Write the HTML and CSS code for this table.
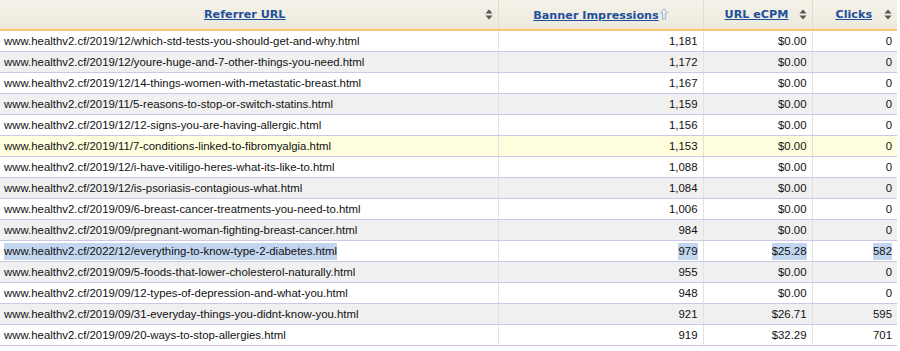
FILE: index.html
```html
<!DOCTYPE html>
<html>
<head>
<meta charset="utf-8">
<link rel="stylesheet" href="styles.css">
</head>
<body>
<table class="report">
  <colgroup>
    <col class="c-url"><col class="c-imp"><col class="c-ecpm"><col class="c-clicks">
  </colgroup>
  <thead>
    <tr>
      <th class="th-url"><a href="#">Referrer URL</a><svg class="sort" viewBox="0 0 8 11"><path d="M4 0.5 L7.5 4.5 H0.5 Z M4 10.5 L7.5 6.5 H0.5 Z"/></svg></th>
      <th><a href="#">Banner Impressions</a><svg class="asc" viewBox="0 0 8 12"><path d="M4 0.8 L7.3 5 H5.4 V11.2 H2.6 V5 H0.7 Z"/></svg></th>
      <th class="th-num"><a href="#">URL eCPM</a><svg class="sort" viewBox="0 0 8 11"><path d="M4 0.5 L7.5 4.5 H0.5 Z M4 10.5 L7.5 6.5 H0.5 Z"/></svg></th>
      <th class="th-num"><a href="#">Clicks</a><svg class="sort" viewBox="0 0 8 11"><path d="M4 0.5 L7.5 4.5 H0.5 Z M4 10.5 L7.5 6.5 H0.5 Z"/></svg></th>
    </tr>
  </thead>
  <tbody>
    <tr><td>www.healthv2.cf/2019/12/which-std-tests-you-should-get-and-why.html</td><td>1,181</td><td>$0.00</td><td>0</td></tr>
    <tr><td>www.healthv2.cf/2019/12/youre-huge-and-7-other-things-you-need.html</td><td>1,172</td><td>$0.00</td><td>0</td></tr>
    <tr><td>www.healthv2.cf/2019/12/14-things-women-with-metastatic-breast.html</td><td>1,167</td><td>$0.00</td><td>0</td></tr>
    <tr><td>www.healthv2.cf/2019/11/5-reasons-to-stop-or-switch-statins.html</td><td>1,159</td><td>$0.00</td><td>0</td></tr>
    <tr><td>www.healthv2.cf/2019/12/12-signs-you-are-having-allergic.html</td><td>1,156</td><td>$0.00</td><td>0</td></tr>
    <tr class="hover"><td>www.healthv2.cf/2019/11/7-conditions-linked-to-fibromyalgia.html</td><td>1,153</td><td>$0.00</td><td>0</td></tr>
    <tr><td>www.healthv2.cf/2019/12/i-have-vitiligo-heres-what-its-like-to.html</td><td>1,088</td><td>$0.00</td><td>0</td></tr>
    <tr><td>www.healthv2.cf/2019/12/is-psoriasis-contagious-what.html</td><td>1,084</td><td>$0.00</td><td>0</td></tr>
    <tr><td>www.healthv2.cf/2019/09/6-breast-cancer-treatments-you-need-to.html</td><td>1,006</td><td>$0.00</td><td>0</td></tr>
    <tr><td>www.healthv2.cf/2019/09/pregnant-woman-fighting-breast-cancer.html</td><td>984</td><td>$0.00</td><td>0</td></tr>
    <tr class="selected"><td><span class="sel">www.healthv2.cf/2022/12/everything-to-know-type-2-diabetes.html</span></td><td><span class="sel">979</span></td><td><span class="sel">$25.28</span></td><td><span class="sel">582</span></td></tr>
    <tr><td>www.healthv2.cf/2019/09/5-foods-that-lower-cholesterol-naturally.html</td><td>955</td><td>$0.00</td><td>0</td></tr>
    <tr><td>www.healthv2.cf/2019/09/12-types-of-depression-and-what-you.html</td><td>948</td><td>$0.00</td><td>0</td></tr>
    <tr><td>www.healthv2.cf/2019/09/31-everyday-things-you-didnt-know-you.html</td><td>921</td><td>$26.71</td><td>595</td></tr>
    <tr><td>www.healthv2.cf/2019/09/20-ways-to-stop-allergies.html</td><td>919</td><td>$32.29</td><td>701</td></tr>
  </tbody>
</table>
</body>
</html>
```
FILE: styles.css
```css
html, body {
  margin: 0;
  padding: 0;
  background: #ffffff;
}

.report {
  width: 897px;
  border-collapse: collapse;
  table-layout: fixed;
  font-family: "Liberation Sans", Arial, sans-serif;
  font-size: 11.4px;
  color: #111;
}

.c-url { width: 498px; }
.c-imp { width: 205px; }
.c-ecpm { width: 109px; }
.c-clicks { width: 85px; }

.report thead th {
  position: relative;
  height: 29px;
  padding: 0;
  background: linear-gradient(#f4f2e8, #eceadd);
  border-left: 1px solid #f8f7f0;
  border-right: 1px solid #dedcce;
  border-bottom: 2px solid #f6c77a;
  box-shadow: inset 0 -1px 0 #fbe2b0;
  text-align: center;
  vertical-align: middle;
  font-family: "DejaVu Sans", Verdana, sans-serif;
  font-size: 11.2px;
  font-weight: bold;
}

.report thead th.th-url { padding-right: 8px; }
.report thead th.th-num { padding-right: 2px; }

.report thead th:first-child { border-left: none; }
.report thead th:last-child { border-right: none; }

.report thead th a {
  color: #1f4f9b;
  text-decoration: underline;
}

.report thead th .sort {
  position: absolute;
  right: 5px;
  top: 9px;
  width: 8px;
  height: 11px;
  fill: #555;
}

.report thead th .asc {
  width: 8px;
  height: 12px;
  margin-left: 1px;
  vertical-align: -1px;
  fill: #eef3f8;
  stroke: #8aa2c0;
  stroke-width: 0.8;
}

.report tbody td {
  height: 20px;
  padding: 0 5px 0 4px;
  border-bottom: 1px solid #c9c9e6;
  border-left: 1px solid #e2e2e2;
  white-space: nowrap;
  overflow: hidden;
  vertical-align: middle;
}

.report tbody td:first-child { border-left: none; }
.report tbody td + td { text-align: right; }

.report tbody tr:nth-child(even) td { background: #f0f0f0; }
.report tbody tr.hover td { background: #ffffdf; }

.sel {
  background: #c3d6f0;
  padding: 2px 0 3px;
}
```
